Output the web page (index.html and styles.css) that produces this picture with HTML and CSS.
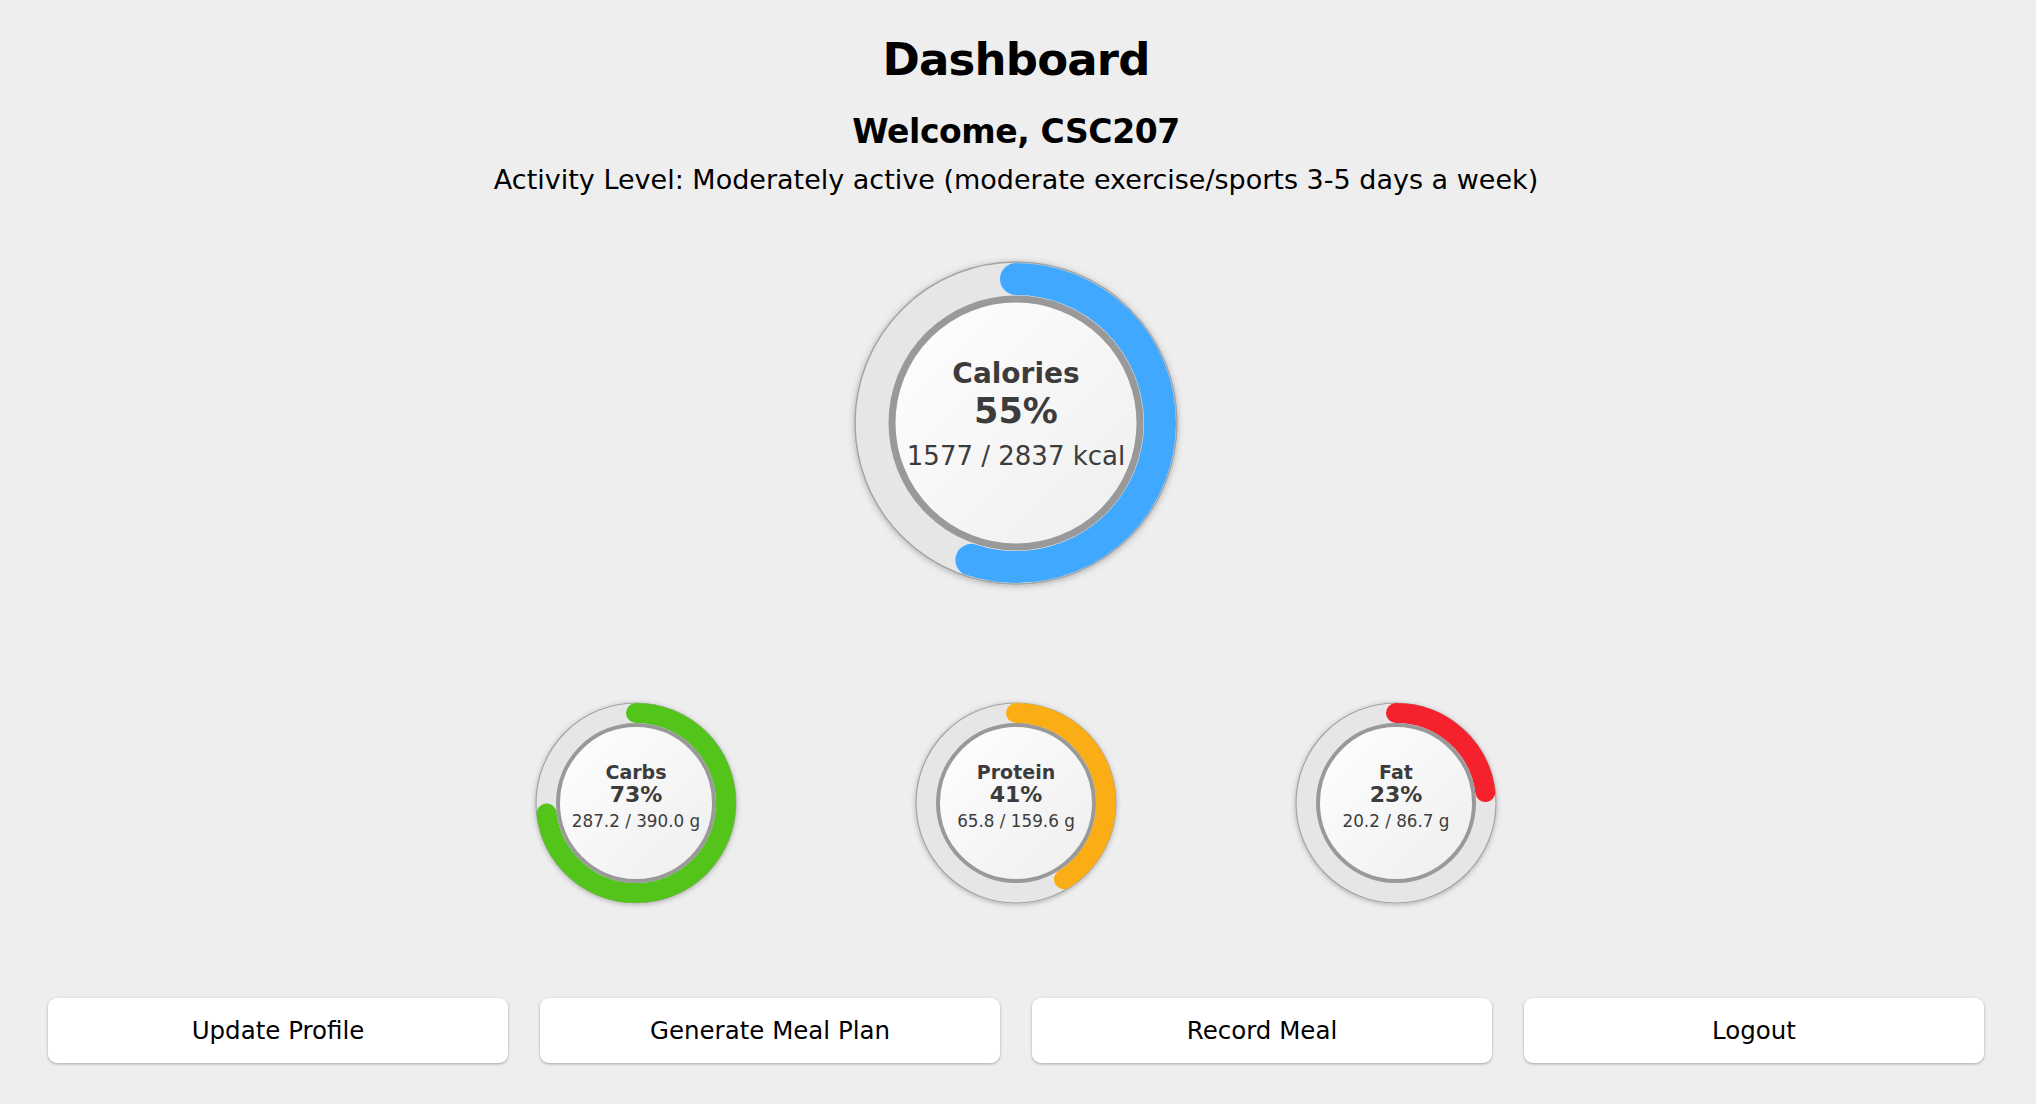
FILE: index.html
```html
<!DOCTYPE html>
<html lang="en">
<head>
<meta charset="utf-8">
<title>Dashboard</title>
<link rel="stylesheet" href="styles.css">
</head>
<body>
<main class="page">
  <h1 class="title">Dashboard</h1>
  <h2 class="welcome">Welcome, CSC207</h2>
  <p class="activity">Activity Level: Moderately active (moderate exercise/sports 3-5 days a week)</p>

  <section class="ring ring-big">
    <svg class="ring-svg" width="340" height="340" viewBox="0 0 340 340">
      <defs>
        <filter id="shBig" x="-20%" y="-20%" width="140%" height="140%">
          <feDropShadow dx="0" dy="1" stdDeviation="3" flood-color="#000" flood-opacity="0.28"/>
        </filter>
        <linearGradient id="gBig" x1="0" y1="0" x2="1" y2="1">
          <stop offset="0" stop-color="#ffffff"/>
          <stop offset="1" stop-color="#eeeeee"/>
        </linearGradient>
      </defs>
      <circle cx="170" cy="170" r="161" fill="#e6e6e6" stroke="#a3a3a3" stroke-width="1.5" filter="url(#shBig)"/>
      <circle cx="170" cy="170" r="144" fill="none" stroke="#40a9ff" stroke-width="32" stroke-linecap="round" stroke-dasharray="497.6 2000" transform="rotate(-90 170 170)"/>
      <circle cx="170" cy="170" r="124" fill="url(#gBig)" stroke="#999999" stroke-width="7"/>
    </svg>
    <div class="ring-text big-text">
      <div class="rt-name">Calories</div>
      <div class="rt-pct">55%</div>
      <div class="rt-val">1577 / 2837 kcal</div>
    </div>
  </section>

  <section class="macros">
    <div class="ring ring-small">
      <svg class="ring-svg" width="220" height="220" viewBox="0 0 220 220">
        <defs>
          <filter id="shC" x="-20%" y="-20%" width="140%" height="140%">
            <feDropShadow dx="0" dy="1" stdDeviation="2.5" flood-color="#000" flood-opacity="0.28"/>
          </filter>
          <linearGradient id="gC" x1="0" y1="0" x2="1" y2="1">
            <stop offset="0" stop-color="#ffffff"/>
            <stop offset="1" stop-color="#eeeeee"/>
          </linearGradient>
        </defs>
        <circle cx="110" cy="110" r="100" fill="#e6e6e6" stroke="#a3a3a3" stroke-width="1.2" filter="url(#shC)"/>
        <circle cx="110" cy="110" r="90" fill="none" stroke="#52c41a" stroke-width="20" stroke-linecap="round" stroke-dasharray="412.8 2000" transform="rotate(-90 110 110)"/>
        <circle cx="110" cy="110" r="78" fill="url(#gC)" stroke="#999999" stroke-width="4"/>
      </svg>
      <div class="ring-text small-text">
        <div class="rs-name">Carbs</div>
        <div class="rs-pct">73%</div>
        <div class="rs-val">287.2 / 390.0 g</div>
      </div>
    </div>

    <div class="ring ring-small">
      <svg class="ring-svg" width="220" height="220" viewBox="0 0 220 220">
        <defs>
          <filter id="shP" x="-20%" y="-20%" width="140%" height="140%">
            <feDropShadow dx="0" dy="1" stdDeviation="2.5" flood-color="#000" flood-opacity="0.28"/>
          </filter>
          <linearGradient id="gP" x1="0" y1="0" x2="1" y2="1">
            <stop offset="0" stop-color="#ffffff"/>
            <stop offset="1" stop-color="#eeeeee"/>
          </linearGradient>
        </defs>
        <circle cx="110" cy="110" r="100" fill="#e6e6e6" stroke="#a3a3a3" stroke-width="1.2" filter="url(#shP)"/>
        <circle cx="110" cy="110" r="90" fill="none" stroke="#faad14" stroke-width="20" stroke-linecap="round" stroke-dasharray="231.8 2000" transform="rotate(-90 110 110)"/>
        <circle cx="110" cy="110" r="78" fill="url(#gP)" stroke="#999999" stroke-width="4"/>
      </svg>
      <div class="ring-text small-text">
        <div class="rs-name">Protein</div>
        <div class="rs-pct">41%</div>
        <div class="rs-val">65.8 / 159.6 g</div>
      </div>
    </div>

    <div class="ring ring-small">
      <svg class="ring-svg" width="220" height="220" viewBox="0 0 220 220">
        <defs>
          <filter id="shF" x="-20%" y="-20%" width="140%" height="140%">
            <feDropShadow dx="0" dy="1" stdDeviation="2.5" flood-color="#000" flood-opacity="0.28"/>
          </filter>
          <linearGradient id="gF" x1="0" y1="0" x2="1" y2="1">
            <stop offset="0" stop-color="#ffffff"/>
            <stop offset="1" stop-color="#eeeeee"/>
          </linearGradient>
        </defs>
        <circle cx="110" cy="110" r="100" fill="#e6e6e6" stroke="#a3a3a3" stroke-width="1.2" filter="url(#shF)"/>
        <circle cx="110" cy="110" r="90" fill="none" stroke="#f5222d" stroke-width="20" stroke-linecap="round" stroke-dasharray="130.1 2000" transform="rotate(-90 110 110)"/>
        <circle cx="110" cy="110" r="78" fill="url(#gF)" stroke="#999999" stroke-width="4"/>
      </svg>
      <div class="ring-text small-text">
        <div class="rs-name">Fat</div>
        <div class="rs-pct">23%</div>
        <div class="rs-val">20.2 / 86.7 g</div>
      </div>
    </div>
  </section>

  <nav class="actions">
    <button class="btn" type="button">Update Profile</button>
    <button class="btn" type="button">Generate Meal Plan</button>
    <button class="btn" type="button">Record Meal</button>
    <button class="btn" type="button">Logout</button>
  </nav>
</main>
</body>
</html>
```

FILE: styles.css
```css
html, body {
  margin: 0;
  padding: 0;
  background: #eeeeee;
}

body {
  font-family: "DejaVu Sans", "Lucida Grande", Verdana, sans-serif;
  color: #000;
  padding-right: 4px;
}

.page {
  display: flex;
  flex-direction: column;
  align-items: center;
  padding-top: 32px;
  height: 1104px;
  box-sizing: border-box;
}

.title {
  margin: 0;
  font-size: 45px;
  line-height: 56px;
  font-weight: bold;
  letter-spacing: -0.8px;
}

.welcome {
  margin: 24px 0 0;
  font-size: 33px;
  line-height: 40px;
  font-weight: bold;
  letter-spacing: -0.4px;
}

.activity {
  margin: 11px 0 0;
  font-size: 27px;
  line-height: 34px;
}

.ring {
  display: grid;
  place-items: center;
}

.ring > * {
  grid-area: 1 / 1;
}

.ring-svg {
  display: block;
  overflow: visible;
}

.ring-big {
  margin-top: 56px;
}

.ring-text {
  display: flex;
  flex-direction: column;
  align-items: center;
  color: #3c3c3c;
  text-align: center;
}

.big-text {
  padding-bottom: 13px;
}

.rt-name {
  font-size: 28px;
  line-height: 34px;
  font-weight: bold;
}

.rt-pct {
  font-size: 35px;
  line-height: 40px;
  font-weight: bold;
}

.rt-val {
  font-size: 26px;
  line-height: 40px;
  margin-top: 5px;
}

.macros {
  display: flex;
  gap: 160px;
  margin-top: 100px;
}

.small-text {
  padding-bottom: 12px;
}

.rs-name {
  font-size: 19px;
  line-height: 22px;
  font-weight: bold;
}

.rs-pct {
  font-size: 22px;
  line-height: 24px;
  font-weight: bold;
}

.rs-val {
  font-size: 16.8px;
  line-height: 24px;
  margin-top: 2px;
}

.actions {
  display: grid;
  grid-template-columns: repeat(4, 460px);
  gap: 32px;
  margin-top: 85px;
}

.btn {
  height: 65px;
  background: #ffffff;
  border: none;
  border-radius: 9px;
  box-shadow: 0 1px 3px rgba(0, 0, 0, 0.3);
  font-family: "DejaVu Sans", "Lucida Grande", Verdana, sans-serif;
  font-size: 24.5px;
  color: #000;
  padding: 0;
}
```
